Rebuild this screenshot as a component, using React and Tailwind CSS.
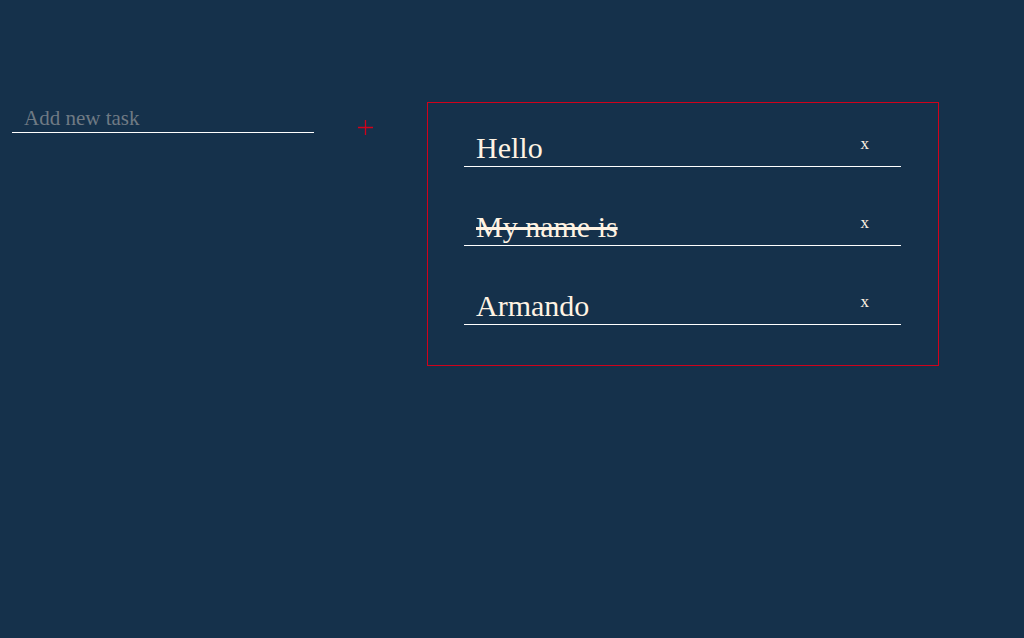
import { useState } from "react";

const initialTasks = [
  { id: 1, text: "Hello", done: false },
  { id: 2, text: "My name is", done: true },
  { id: 3, text: "Armando", done: false },
];

export default function App() {
  const [tasks, setTasks] = useState(initialTasks);
  const [value, setValue] = useState("");

  const addTask = () => {
    if (!value.trim()) return;
    setTasks([...tasks, { id: Date.now(), text: value, done: false }]);
    setValue("");
  };

  return (
    <div
      className="min-h-screen w-full bg-[#15314b] flex items-start pt-[102px]"
      style={{ fontFamily: '"Liberation Serif", "DejaVu Serif", serif' }}
    >
      <div className="flex items-start ml-[12px] mt-[2px]">
        <input
          type="text"
          value={value}
          onChange={(e) => setValue(e.target.value)}
          placeholder="Add new task"
          className="w-[302px] h-[29px] bg-transparent border-b border-white pl-3 text-[21px] leading-none text-[#fff3e3] placeholder:text-[#6f7a84] outline-none"
        />
        <button
          type="button"
          onClick={addTask}
          className="ml-[43px] mt-[15px] w-[17px] h-[17px] block p-0"
        >
          <svg className="block" width="17" height="17" viewBox="0 0 17 17">
            <path d="M8.5 1V16M1 8.5H16" stroke="#d0021b" strokeWidth="1.3" />
          </svg>
        </button>
      </div>

      <div className="ml-[53px] w-[512px] border border-[#d0021b] pl-[36px] pr-[37px] pt-[18px] pb-[40px] flex flex-col gap-[33px]">
        {tasks.map((task) => (
          <div
            key={task.id}
            className="h-[46px] border-b border-white flex items-end justify-between pl-3 pr-[32px]"
          >
            <span
              className={
                "text-[30px] leading-none pb-[3px] text-[#fff3e3] cursor-pointer " +
                (task.done ? "line-through" : "")
              }
              onClick={() =>
                setTasks(tasks.map((t) => (t.id === task.id ? { ...t, done: !t.done } : t)))
              }
            >
              {task.text}
            </span>
            <button
              type="button"
              className="text-[17px] leading-none text-[#fff3e3] pb-[14px]"
              onClick={() => setTasks(tasks.filter((t) => t.id !== task.id))}
            >
              x
            </button>
          </div>
        ))}
      </div>
    </div>
  );
}
